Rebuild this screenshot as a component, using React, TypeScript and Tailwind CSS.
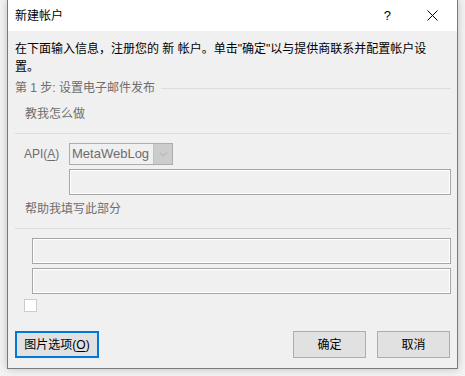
import { ChevronDown } from "lucide-react";

const FONT = {
  fontFamily: '"Liberation Sans", "Noto Sans CJK SC", sans-serif',
};

function Field({ className = "" }: { className?: string }) {
  return (
    <div
      className={`h-[26px] border border-[#a6a6a6] bg-[#f0f0f0] shadow-[inset_0_0_0_1px_#ffffff] ${className}`}
    />
  );
}

function Button({
  label,
  hotkey,
  focused = false,
  className = "",
}: {
  label: string;
  hotkey?: string;
  focused?: boolean;
  className?: string;
}) {
  return (
    <button
      type="button"
      className={`flex h-[27px] items-center justify-center bg-[#e1e1e1] text-[12px] text-black ${
        focused ? "border-2 border-[#0078d7]" : "border border-[#adadad]"
      } ${className}`}
    >
      {label}
      {hotkey && (
        <>
          (<span className="underline underline-offset-2">{hotkey}</span>)
        </>
      )}
    </button>
  );
}

export default function App() {
  return (
    <div className="h-[376px] w-[465px] overflow-hidden bg-[#f3f3f3]" style={FONT}>
      <div className="ml-[7px] flex h-[369px] w-[451px] flex-col border-x border-b border-[#7a7a7a] bg-[#f0f0f0] shadow-[0_0_8px_rgba(0,0,0,0.22)]">
        {/* title bar */}
        <div className="flex h-[31px] shrink-0 items-center bg-white text-[12px] text-black">
          <span className="pl-[7px]">新建帐户</span>
          <span className="ml-auto mr-[36px] text-[13px]">?</span>
          <svg width="11" height="11" viewBox="0 0 11 11" className="mr-[19px]">
            <path d="M0.5 0.5 L10.5 10.5 M10.5 0.5 L0.5 10.5" stroke="#000" strokeWidth="1" />
          </svg>
        </div>

        <div className="flex flex-1 flex-col pl-[7px] pr-[6px] text-[12px] leading-[18px]">
          <p className="mt-[9px] text-black">
            在下面输入信息，注册您的 新 帐户。单击"确定"以与提供商联系并配置帐户设
            <br />
            置。
          </p>

          <div className="mt-[3px] flex items-center text-[#6d6d6d]">
            <span>第 1 步: 设置电子邮件发布</span>
            <div className="ml-[6px] h-px flex-1 bg-[#dcdcdc]" />
          </div>

          <div className="mt-[8px] pl-[10px] text-[#6d6d6d]">教我怎么做</div>

          <div className="mt-[10px] h-px bg-[#dcdcdc]" />

          <div className="mt-[9px] flex items-center">
            <span className="w-[54px] pl-[9px] text-[#6d6d6d]">
              API(<span className="underline underline-offset-2">A</span>)
            </span>
            <div className="flex h-[22px] w-[104px] items-stretch border border-[#adadad]">
              <span className="flex flex-1 items-center pl-[2px] text-[13px] text-[#6d6d6d]">
                MetaWebLog
              </span>
              <span className="flex w-[19px] items-center justify-center border-l border-[#c4c4c4] bg-[#cccccc]">
                <ChevronDown size={13} strokeWidth={1} color="#8f8f8f" />
              </span>
            </div>
          </div>

          <Field className="ml-[54px] mt-[4px]" />

          <div className="mt-[5px] pl-[10px] text-[#6d6d6d]">帮助我填写此部分</div>

          <div className="mt-[10px] h-px bg-[#dcdcdc]" />

          <Field className="ml-[17px] mt-[9px]" />
          <Field className="ml-[17px] mt-[4px]" />

          <div className="ml-[9px] mt-[5px] h-[13px] w-[13px] border border-[#cccccc] bg-white" />

          <div className="mt-[19px] flex items-center pr-[1px]">
            <Button label="图片选项" hotkey="O" focused className="w-[84px]" />
            <Button label="确定" className="ml-auto w-[73px]" />
            <Button label="取消" className="ml-[11px] w-[73px]" />
          </div>
        </div>
      </div>
    </div>
  );
}
